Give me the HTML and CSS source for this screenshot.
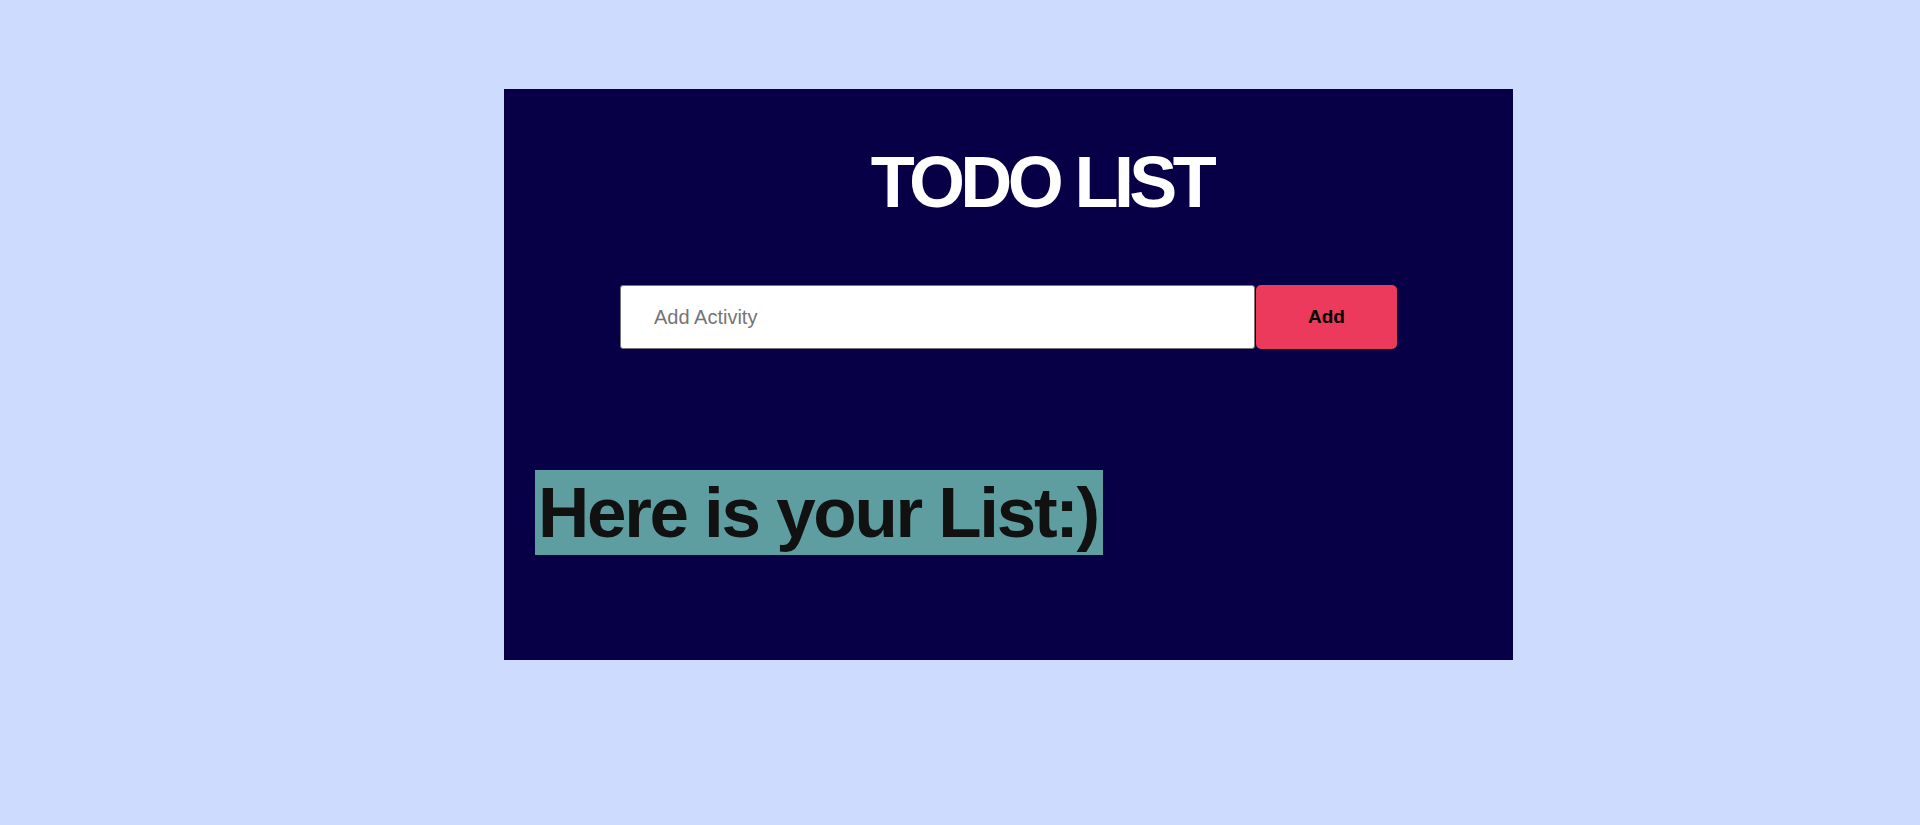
FILE: index.html
```html
<!DOCTYPE html>
<html lang="en">
<head>
<meta charset="utf-8">
<title>Todo List</title>
<link rel="stylesheet" href="styles.css">
</head>
<body>
  <main class="todo-card">
    <h1 class="todo-title">TODO LIST</h1>
    <form class="todo-form">
      <input class="todo-input" type="text" placeholder="Add Activity">
      <button class="todo-add" type="button">Add</button>
    </form>
    <h2 class="list-heading">Here is your List:)</h2>
  </main>
</body>
</html>
```
FILE: styles.css
```css
html, body {
  margin: 0;
  padding: 0;
}

body {
  background: #cddcfe;
  font-family: "Liberation Sans", Arial, sans-serif;
  min-height: 825px;
  padding-top: 89px;
  box-sizing: border-box;
}

.todo-card {
  margin-left: 504px;
  width: 1009px;
  height: 571px;
  background: #070046;
  display: flex;
  flex-direction: column;
  box-sizing: border-box;
  padding-top: 52px;
}

.todo-title {
  margin: 0;
  padding-left: 66px;
  text-align: center;
  color: #ffffff;
  font-family: "Liberation Sans", Arial, sans-serif;
  font-weight: 700;
  font-size: 72px;
  line-height: 83px;
  letter-spacing: -4.6px;
}

.todo-form {
  margin: 61px 0 0;
  display: flex;
  justify-content: center;
}

.todo-input {
  width: 635px;
  height: 64px;
  box-sizing: border-box;
  border: 1px solid #767676;
  border-radius: 3px;
  padding: 0 0 0 33px;
  margin: 0;
  font-family: "Liberation Sans", Arial, sans-serif;
  font-size: 20px;
  color: #222;
  background: #fff;
  outline: none;
}

.todo-input::placeholder {
  color: #757575;
}

.todo-add {
  width: 141px;
  height: 64px;
  margin: 0 0 0 1px;
  border: none;
  border-radius: 5px;
  background: #ec3a5c;
  color: #000;
  font-family: "Liberation Sans", Arial, sans-serif;
  font-weight: 700;
  font-size: 19px;
}

.list-heading {
  margin: 121px 0 0 31px;
  align-self: flex-start;
  background: #5f9ea0;
  color: #111111;
  font-family: "Liberation Sans", Arial, sans-serif;
  font-weight: 700;
  font-size: 71px;
  line-height: 85px;
  padding: 0 5px 0 3px;
  letter-spacing: -2.3px;
}
```
